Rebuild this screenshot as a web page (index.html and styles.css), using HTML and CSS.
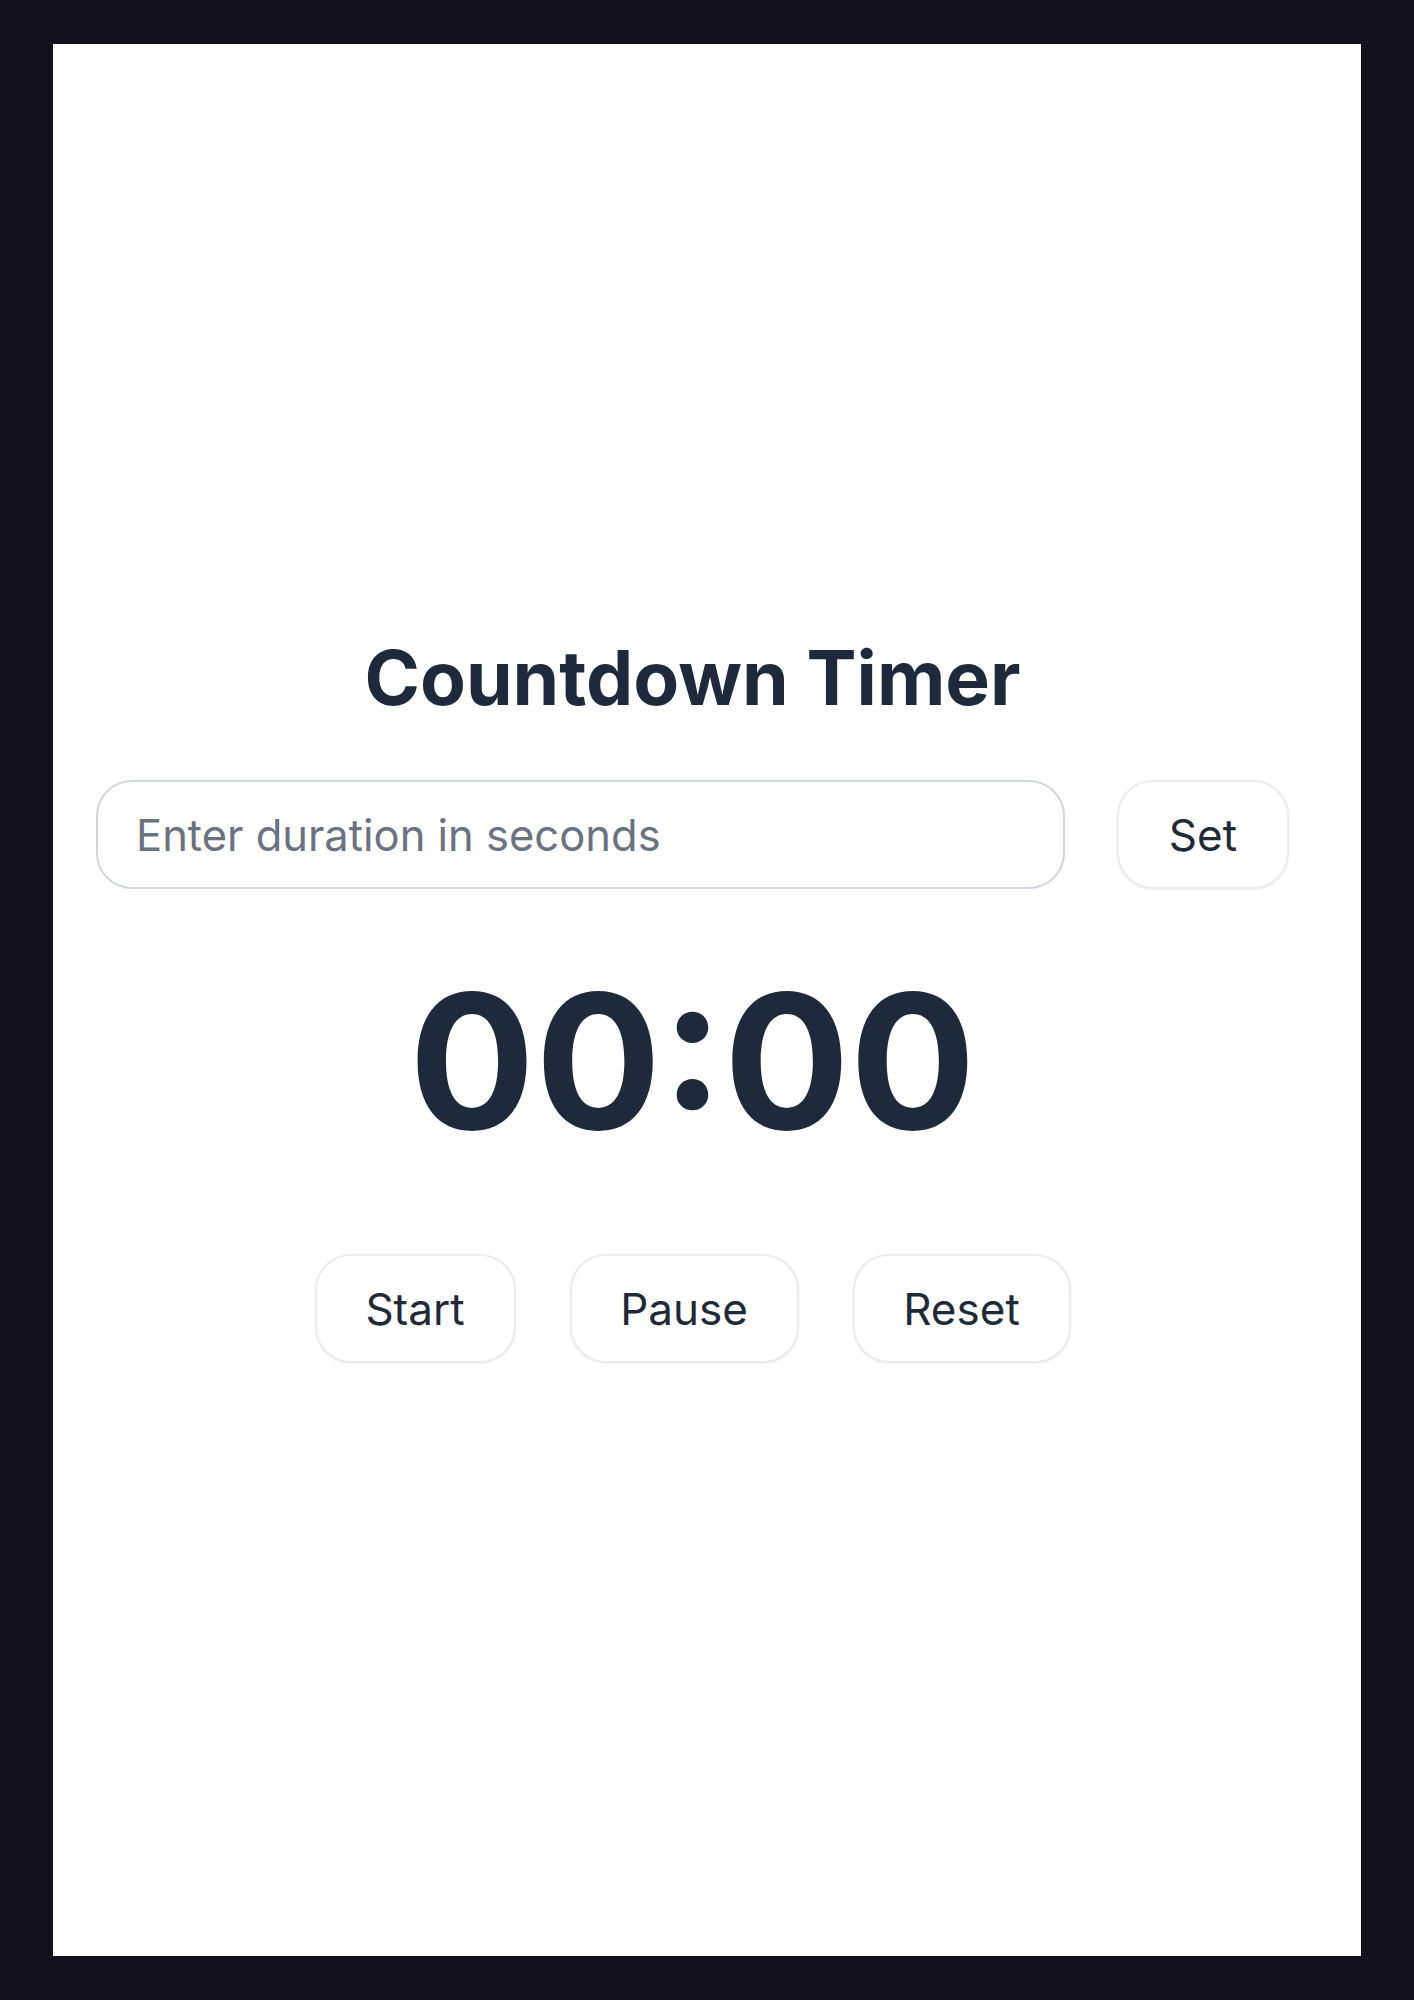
FILE: index.html
```html
<!DOCTYPE html>
<html lang="en">
<head>
<meta charset="utf-8">
<title>Countdown Timer</title>
<link rel="stylesheet" href="styles.css">
</head>
<body>
<div class="frame">
  <main class="panel">
    <h1 class="title">Countdown Timer</h1>
    <div class="set-row">
      <input class="duration" type="text" placeholder="Enter duration in seconds">
      <button class="btn btn-set">Set</button>
    </div>
    <div class="display">00:00</div>
    <div class="controls">
      <button class="btn btn-start">Start</button>
      <button class="btn btn-pause">Pause</button>
      <button class="btn btn-reset">Reset</button>
    </div>
  </main>
</div>
</body>
</html>
```

FILE: styles.css
```css
html, body {
  margin: 0;
  padding: 0;
  background: #13121c;
}

.frame {
  padding: 44px 53px 44px 53px;
  height: 2000px;
  box-sizing: border-box;
}

.panel {
  background: #ffffff;
  height: 1912px;
  box-sizing: border-box;
  padding: 589px 72px 0 43px;
  display: flex;
  flex-direction: column;
  align-items: center;
  justify-content: flex-start;
  font-family: Inter, "Noto Sans", sans-serif;
  color: #1e293b;
}

.title {
  margin: 0;
  font-size: 75px;
  font-weight: 700;
  line-height: 1.2;
  color: #1e293b;
}

.set-row {
  align-self: stretch;
  display: flex;
  gap: 52px;
  margin-top: 57px;
}

.duration {
  flex: 1;
  height: 109px;
  box-sizing: border-box;
  border: 2px solid #d3d7dd;
  border-radius: 36px;
  padding: 0 0 0 38px;
  font-family: Inter, "Noto Sans", sans-serif;
  font-size: 43.5px;
  color: #1e293b;
  outline: none;
  background: #fff;
}

.duration::placeholder {
  color: #6b7280;
}

.btn {
  height: 109px;
  box-sizing: border-box;
  border: 2px solid #eaecef;
  border-radius: 36px;
  background: #fff;
  box-shadow: 0 1px 3px rgba(15, 23, 42, 0.06);
  font-family: Inter, "Noto Sans", sans-serif;
  font-size: 44px;
  color: #1f2937;
  padding: 0;
}

.btn-set { width: 172px; }

.display {
  margin-top: 60px;
  font-size: 187px;
  font-weight: 700;
  line-height: 1.2;
  color: #1e293b;
}

.controls {
  display: flex;
  gap: 54px;
  margin-top: 81px;
}

.btn-start { width: 201px; }
.btn-pause { width: 229px; }
.btn-reset { width: 218px; }
```
